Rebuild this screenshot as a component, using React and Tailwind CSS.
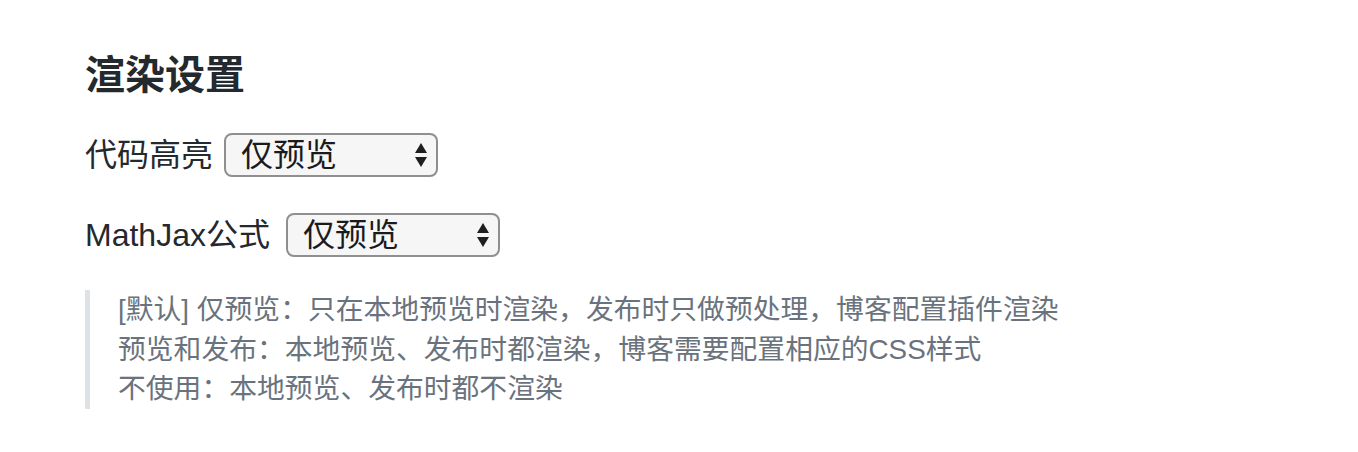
import { useState } from 'react';

const font = { fontFamily: '"Liberation Sans", "Noto Sans CJK SC", sans-serif' };

function Arrows() {
  return (
    <svg width="14" height="26" viewBox="0 0 14 26" className="pointer-events-none absolute right-[10px] top-1/2 -translate-y-1/2">
      <path d="M7 1 L13 11 L1 11 Z" fill="#1f1f1f" />
      <path d="M7 25 L13 15 L1 15 Z" fill="#1f1f1f" />
    </svg>
  );
}

function Picker({ value, onChange, width }) {
  return (
    <div className="relative" style={{ width }}>
      <select
        value={value}
        onChange={e => onChange(e.target.value)}
        className="h-[44px] w-full appearance-none rounded-[8px] border-2 border-[#8f8f8f] bg-[#f6f6f6] pl-[15px] pr-8 text-[32px] leading-none text-[#1b1b1b] outline-none"
        style={font}
      >
        <option value="preview">仅预览</option>
        <option value="both">预览和发布</option>
        <option value="none">不使用</option>
      </select>
      <Arrows />
    </div>
  );
}

export default function App() {
  const [highlight, setHighlight] = useState('preview');
  const [mathjax, setMathjax] = useState('preview');

  return (
    <div className="min-h-[452px] bg-white px-[85px] pt-[50px] text-[#24292e]" style={font}>
      <h2 className="text-[40px] font-bold leading-[50px]">渲染设置</h2>

      <div className="mt-[33px] flex items-center gap-[11px]">
        <span className="text-[32px] leading-[44px]">代码高亮</span>
        <Picker value={highlight} onChange={setHighlight} width={214} />
      </div>

      <div className="mt-[36px] flex items-center gap-[16px]">
        <span className="text-[32px] leading-[44px]">MathJax公式</span>
        <Picker value={mathjax} onChange={setMathjax} width={214} />
      </div>

      <blockquote className="mt-[33px] border-l-[5px] border-[#dfe2e5] pl-[28px] text-[27.8px] leading-[39.5px] text-[#6a737d]">
        <div>[默认] 仅预览：只在本地预览时渲染，发布时只做预处理，博客配置插件渲染</div>
        <div>预览和发布：本地预览、发布时都渲染，博客需要配置相应的CSS样式</div>
        <div>不使用：本地预览、发布时都不渲染</div>
      </blockquote>
    </div>
  );
}
